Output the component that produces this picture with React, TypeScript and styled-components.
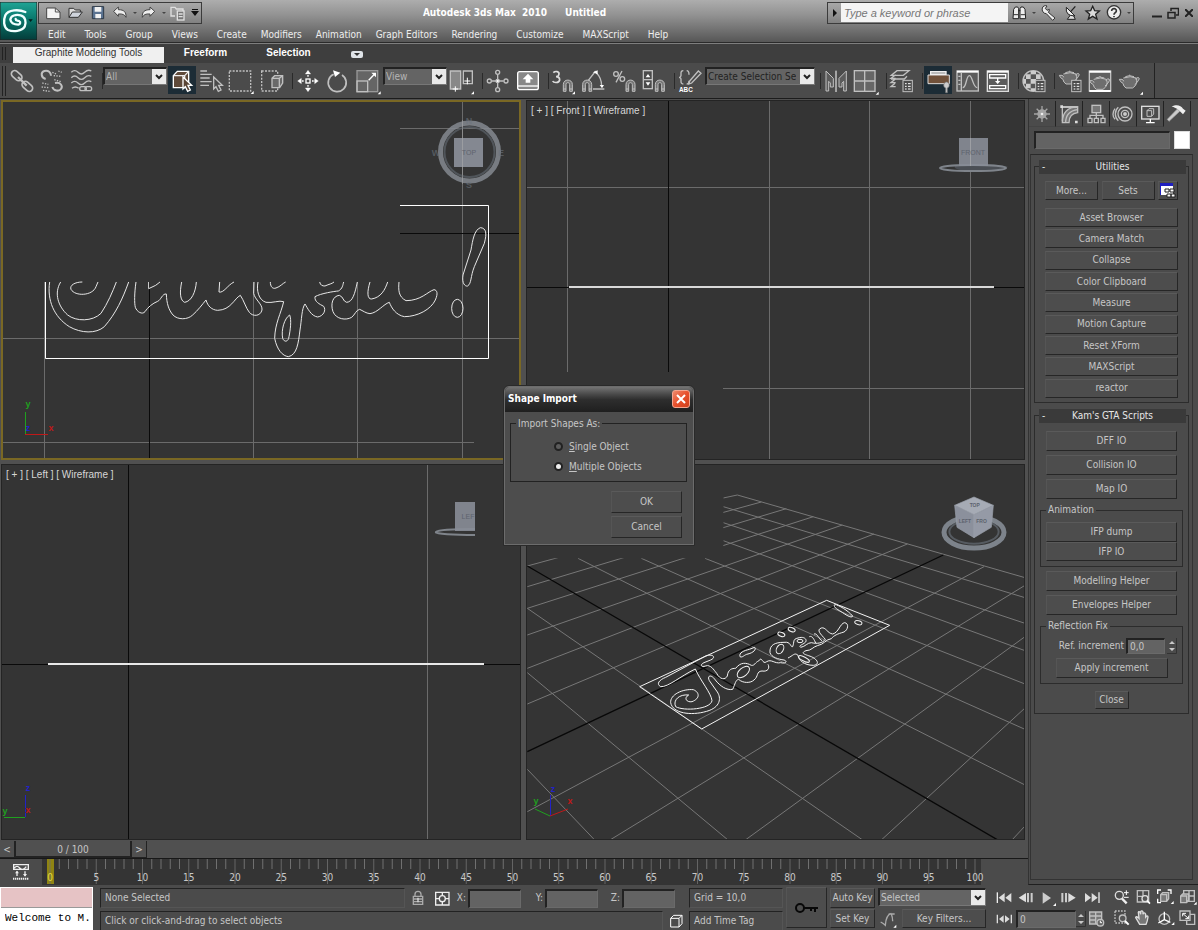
import React from "react";
import styled, { createGlobalStyle, css } from "styled-components";

const ui = '"DejaVu Sans Condensed", "DejaVu Sans", Tahoma, sans-serif';
const arial = '"Liberation Sans", Arial, sans-serif';

const Global = createGlobalStyle`
  *, *::before, *::after { box-sizing: border-box; }
  body { margin: 0; background: #4b4b4b; color: #c6c6c6; font: 10px/12px ${ui}; }
  button, input, select { font: inherit; color: inherit; margin: 0; padding: 0; border: 0; border-radius: 0; background: none; }
  svg { display: block; }
`;

const Shell = styled.div`
  display: flex;
  flex-direction: column;
  min-height: 100vh;
  min-width: 1100px;
`;

/* ---------- title bar ---------- */
const Header = styled.header`
  display: flex;
  height: 44px;
  background: linear-gradient(#adadad, #929292 35%, #6c6c6c 75%, #545454);
  border-bottom: 1px solid #7e7e7e;
  box-shadow: inset 0 -1px #2a2a2a;
`;
const AppButton = styled.button`
  width: 37px;
  height: 38px;
  margin: 2px 1px 0 0;
`;
const HeaderBody = styled.div`
  flex: 1;
  display: flex;
  flex-direction: column;
`;
const TitleRow = styled.div`
  display: grid;
  grid-template-columns: auto 1fr auto;
  height: 25px;
  align-items: center;
`;
const QuickAccess = styled.div`
  display: flex;
  align-items: center;
  width: 164px;
  height: 22px;
  border: 1px solid #3b3b3b;
  padding-left: 4px;
`;
const QuickButton = styled.button<{ $w?: number }>`
  width: ${(p) => p.$w ?? 22}px;
  height: 20px;
  display: grid;
  place-items: center;
  flex: none;
`;
const Title = styled.h1`
  margin: 0;
  display: flex;
  justify-content: center;
  gap: 18px;
  font: bold 10px/12px ${ui};
  color: #fff;
  white-space: pre;
`;
const TitleRight = styled.div`
  display: flex;
  justify-content: flex-end;
  align-items: center;
  padding-right: 2px;
`;
const InfoCenter = styled.div`
  display: flex;
  align-items: center;
  height: 22px;
  border: 1px solid #3b3b3b;
  margin-right: 15px;
`;
const Search = styled.input`
  width: 167px;
  height: 19px;
  padding: 0 3px;
  background: #f4f4f4;
  color: #555;
  font: italic 11px/18px ${arial};
  &::placeholder { color: #777; opacity: 1; }
`;
const Menu = styled.nav`
  display: flex;
  align-items: center;
  gap: 19px;
  height: 18px;
  padding: 1px 0 0 10px;
  color: #eee;
`;
const MenuRun = styled.div`
  display: flex;
  gap: 14px;
`;

/* ---------- ribbon ---------- */
const Ribbon = styled.div`
  display: flex;
  align-items: flex-start;
  height: 19px;
  background: #3e3e3e;
  font: 10px/12px ${arial};
`;
const Grip = styled.span`
  width: 4px;
  align-self: stretch;
  margin: 3px 7px 3px 2px;
  border: 1px solid #222;
  border-width: 0 1px;
  flex: none;
`;
const RibbonTab = styled.button<{ $active?: boolean }>`
  height: 16px;
  width: ${(p) => (p.$active ? 151 : 83)}px;
  margin-top: 3px;
  padding-bottom: 4px;
  color: #fff;
  font-weight: bold;
  ${(p) => p.$active && css`
    background: #f0f0f0;
    color: #333;
    font-weight: normal;
  `}
`;
const RibbonToggle = styled.button`
  width: 12px;
  height: 7px;
  margin: 7px 0 0 21px;
  border-radius: 2px;
  background: #dfe3e8;
  display: grid;
  place-items: center;
`;

/* ---------- main toolbar ---------- */
const Toolbar = styled.div`
  display: flex;
  height: 36px;
  background: #4b4b4b;
  border-bottom: 1px solid #1c1c1c;
`;
const ToolbarInner = styled.div`
  display: flex;
  border-right: 1px solid #222;
  padding-right: 9px;
`;
const ToolbarGrip = styled(Grip)`
  margin: 3px 1px 2px 2px;
`;
const Tool = styled.button<{ $on?: boolean }>`
  width: 30px;
  height: 35px;
  display: grid;
  place-items: center;
  ${(p) => p.$on && css`
    background: linear-gradient(#1c2c36, #1c2c36) 1px 3px / 28px 28px no-repeat;
  `}
`;
const Sep = styled.span`
  width: 6px;
  height: 16px;
  margin-top: 10px;
  border-right: 1px solid #2a2a2a;
  flex: none;
`;
const SelectBox = styled.span<{ $w?: number }>`
  position: relative;
  display: block;
  width: ${(p) => (p.$w ? `${p.$w}px` : "100%")};
  height: 18px;
  background: #646464;
  border: 2px solid #222;
  border-right: 1px solid #777;
  border-bottom: 1px solid #777;
  select {
    appearance: none;
    width: 100%;
    height: 100%;
    display: block;
    padding-left: 1px;
    padding-right: 18px;
    outline: none;
  }
  option { background: #686868; }
  > svg { position: absolute; right: 0; top: 0; pointer-events: none; }
`;
const ToolSelect = styled(SelectBox)`
  margin-top: 4px;
  color: ${(p) => (p.$w === 110 ? "#222" : "#b5b5b5")};
`;

/* ---------- workspace ---------- */
const Workspace = styled.main`
  flex: 1;
  display: flex;
`;
const Stage = styled.div`
  flex: 1;
  min-width: 0;
  display: flex;
  flex-direction: column;
`;
const Viewports = styled.div`
  flex: 1;
  min-height: 480px;
  display: grid;
  grid-template-columns: minmax(0, 520fr) minmax(0, 499fr);
  grid-template-rows: minmax(0, 360fr) minmax(0, 376fr);
  column-gap: 5px;
  row-gap: 4px;
  padding: 1px 3px 1px 1px;
  background: #505050;
`;
const Viewport = styled.section<{ $active?: boolean }>`
  position: relative;
  background: #343434;
  > svg { position: absolute; inset: 0; width: 100%; height: 100%; }
  &::after {
    content: "";
    position: absolute;
    inset: 0;
    pointer-events: none;
    border: ${(p) => (p.$active ? "2px solid #7a6824" : "1px solid #242424")};
  }
`;
const ViewLabel = styled.span`
  position: absolute;
  left: 5px;
  top: 5px;
  font: 10px/12px ${arial};
  color: #d6d6d6;
`;
const TimeSlider = styled.div`
  display: flex;
  height: 17px;
  background: #505050;
`;
const SliderStep = styled.button`
  width: 15px;
  padding-top: 2px;
  border: 1px solid #222;
  border-width: 0 1px 1px 0;
`;
const SliderThumb = styled.button`
  width: 117px;
  padding-top: 3px;
  border: 1px solid #222;
  border-width: 0 2px 2px 1px;
`;
const TrackBar = styled.div`
  display: flex;
  height: 27px;
  border-top: 1px solid #181818;
`;
const TrackToggle = styled.button`
  width: 42px;
  display: grid;
  place-items: center;
`;
const Track = styled.div`
  flex: 1;
  margin-right: 47px;
  background: #343434;
  font: 10px/12px ${ui};
  svg { width: 100%; height: 25px; overflow: visible; }
`;

/* ---------- command panel ---------- */
const Panel = styled.aside`
  width: 170px;
  flex: none;
  display: flex;
  flex-direction: column;
  border-left: 1px solid #333;
  border-bottom: 1px solid #1f1f1f;
`;
const PanelTabs = styled.div`
  display: flex;
  height: 28px;
  padding-top: 2px;
`;
const PanelTab = styled.button<{ $active?: boolean }>`
  width: 27px;
  display: grid;
  place-items: center;
  border-right: 1px solid #222;
  border-bottom: 1px solid ${(p) => (p.$active ? "transparent" : "#444")};
`;
const NameRow = styled.div`
  display: flex;
  gap: 4px;
  height: 18px;
  margin: 4px 8px 0 5px;
`;
const Field = styled.input`
  min-width: 0;
  width: 100%;
  background: #636363;
  border: 2px solid #222;
  border-right: 1px solid #6a6a6a;
  border-bottom: 1px solid #6a6a6a;
  padding-left: 2px;
`;
const Swatch = styled.button`
  width: 16px;
  flex: none;
  background: #fff;
  border: 1px solid #ddd;
`;
const Rollouts = styled.div`
  flex: 1;
  margin: 5px 5px 4px 1px;
  padding: 5px 2px 0 3px;
  border: 1px solid #333;
  border-top-color: #2a2a2a;
`;
const Rollout = styled.section<{ $pad: number }>`
  position: relative;
  border: 1px solid #2c2c2c;
  margin: 6px 0 12px;
  padding: 14px ${(p) => p.$pad}px 4px;
  width: 155px;
`;
const RolloutTitle = styled.button`
  position: absolute;
  top: -7px;
  left: 4px;
  right: 2px;
  height: 14px;
  background: #3a3a3a;
  color: #e6e6e6;
  text-align: center;
  &::before { content: "-"; position: absolute; left: 3px; }
`;
const Push = styled.button<{ $w?: number; $h?: number }>`
  display: block;
  width: ${(p) => (p.$w ? `${p.$w}px` : "100%")};
  height: ${(p) => p.$h ?? 19}px;
  background: #4d4d4d;
  border: 1px solid #5a5a5a;
  border-left-color: #555;
  border-right: 1px solid #262626;
  border-bottom: 1px solid #262626;
  white-space: nowrap;
`;
const PushRow = styled.div`
  display: flex;
  justify-content: space-between;
  margin-bottom: 8px;
`;
const PushList = styled.div`
  display: grid;
  grid-auto-rows: 1fr;
  gap: 2px;
  height: 190px;
`;
const Stack = styled.div<{ $top?: number }>`
  display: flex;
  flex-direction: column;
  align-items: center;
  gap: 4px;
  margin: 0 6px;
  padding-top: ${(p) => p.$top ?? 0}px;
`;
const Group = styled.fieldset`
  margin: 5px 0 4px;
  padding: 6px 5px 5px;
  border: 1px solid #2c2c2c;
  min-width: 0;
  legend { padding: 0 2px; margin-left: 0; }
`;
const SpinRow = styled.div`
  display: flex;
  justify-content: flex-end;
  align-items: center;
  gap: 2px;
  height: 16px;
  margin-bottom: 4px;
  input { width: 39px; height: 16px; }
`;

/* ---------- dialog ---------- */
const DialogLayer = styled.div`
  position: fixed;
  inset: 0;
  display: grid;
  place-items: center;
  pointer-events: none;
`;
const Dialog = styled.div`
  pointer-events: auto;
  width: 192px;
  background: #4d4d4d;
  border: 1px solid #2a2a2a;
  border-radius: 6px 6px 0 0;
  box-shadow: inset 0 0 0 1px #6c6c6c;
  padding: 1px 1px 7px;
`;
const DialogTitle = styled.div`
  display: flex;
  align-items: center;
  justify-content: space-between;
  height: 25px;
  padding: 0 3px 0 3px;
  border-radius: 5px 5px 0 0;
  background: linear-gradient(#747474, #484848 30%, #2e2e2e 50%, #1f1f1f);
  color: #fff;
  font-weight: bold;
`;
const CloseBox = styled.button`
  width: 18px;
  height: 18px;
  border: 1px solid #f5a58e;
  border-radius: 3px;
  background: linear-gradient(135deg, #f08a6d, #e8502c 50%, #cf3f1a);
  display: grid;
  place-items: center;
`;
const DialogGroup = styled(Group)`
  margin: 6px 6px 9px 5px;
  padding: 7px 8px 4px 43px;
  border-color: #222;
  legend { margin-left: -38px; }
`;
const RadioLabel = styled.label`
  display: flex;
  align-items: center;
  gap: 6px;
  height: 20px;
  u { text-underline-offset: 1px; }
  input {
    appearance: none;
    width: 9px;
    height: 9px;
    border-radius: 50%;
    border: 2px solid #222;
    background: #5c5c5c;
  }
  input:checked { background: #eee; }
`;
const DialogButtons = styled.div`
  display: flex;
  flex-direction: column;
  align-items: flex-end;
  gap: 3px;
  padding-right: 11px;
`;

/* ---------- status area ---------- */
const Status = styled.footer`
  display: flex;
  height: 45px;
  padding-top: 2px;
`;
const Listener = styled.div`
  width: 93px;
  height: 43px;
  display: flex;
  flex-direction: column;
  border: 1px solid #fff;
  flex: none;
`;
const ListenerLine = styled.input<{ $pink?: boolean }>`
  width: 100%;
  height: ${(p) => (p.$pink ? 20 : 21)}px;
  background: ${(p) => (p.$pink ? "#e6c3c5" : "#fff")};
  border-bottom: 1px solid ${(p) => (p.$pink ? "#999" : "#fff")};
  color: #000;
  padding-left: 4px;
  font: 11px/16px "Liberation Mono", "Courier New", monospace;
`;
const StatusMid = styled.div`
  flex: 1;
  min-width: 0;
  display: flex;
  flex-direction: column;
  gap: 3px;
  margin: 1px 3px 0 7px;
`;
const StatusRow = styled.div`
  display: flex;
  align-items: center;
  height: 20px;
`;
const Prompt = styled.div<{ $w?: number }>`
  ${(p) => (p.$w ? css`width: ${p.$w}px; flex: none;` : css`flex: 1; min-width: 0;`)}
  height: 20px;
  padding: 3px 4px;
  border: 1px solid #555;
  border-left-color: #222;
  border-top-color: #222;
  white-space: nowrap;
  overflow: hidden;
`;
const StatusTool = styled.button<{ $w?: number }>`
  width: ${(p) => p.$w ?? 22}px;
  height: 20px;
  display: grid;
  place-items: center;
  flex: none;
`;
const Coord = styled.label<{ $w: number }>`
  display: flex;
  align-items: center;
  justify-content: flex-end;
  gap: 2px;
  width: ${(p) => p.$w}px;
  input { width: 53px; height: 19px; }
`;
const CoordGap = styled.span`
  width: 14px;
  flex: none;
`;
const KeyBig = styled(Push)`
  display: grid;
  place-items: center;
  flex: none;
`;
const KeyGrid = styled.div`
  display: grid;
  grid-template-columns: 45px 108px;
  grid-template-rows: 20px 19px;
  gap: 1px 3px;
  margin: 1px 7px 0 3px;
  align-content: start;
`;
const KeyFilters = styled.div`
  display: flex;
  gap: 2px;
`;
const Playback = styled.div`
  display: flex;
  flex-direction: column;
  width: 117px;
`;
const NavGrid = styled.div`
  display: grid;
  grid-template-columns: repeat(4, 22px);
  grid-auto-rows: 21px;
`;
const FrameRow = styled.div`
  display: flex;
  align-items: center;
  height: 21px;
  input { width: 60px; height: 18px; margin-left: 1px; }
`;

/* ---------- icons ---------- */
type BoxProps = { x: number; y: number; w?: number; h?: number; children: React.ReactNode };
/* Icon art is drawn at three units per pixel. */
const Ic = ({ x, y, w = 28, h = 30, children }: BoxProps) => (
  <svg width={w} height={h} viewBox={`${x} ${y} ${w * 3} ${h * 3}`} fill="none" stroke="#c0c0c0" strokeWidth="4" aria-hidden="true">
    {children}
  </svg>
);
const Arrow = () => (
  <svg width="14" height="15" viewBox="0 0 14 15" aria-hidden="true">
    <rect width="14" height="15" fill="#e9e9e9" />
    <path d="M4 6l3 3 3-3" fill="none" stroke="#222" strokeWidth="2" />
  </svg>
);
const Spin = () => (
  <svg width="10" height="16" viewBox="0 0 10 16" fill="#c8c8c8" aria-hidden="true">
    <path d="M2 6l3-3 3 3zM2 10l3 3 3-3z" />
    <path d="M9.500 0v15.500H0" fill="none" stroke="#333" />
  </svg>
);
const Dot = () => (
  <svg width="4" height="4" viewBox="0 0 4 4" aria-hidden="true"><path d="M0 1h4L2 3z" fill="#444" /></svg>
);
const Corner = ({ x, y }: { x: number; y: number }) => <path d={`M${x} ${y}l9 -9v9z`} fill="#fff" stroke="none" />;
const Magnet = ({ x }: { x: number }) => (
  <path d={`M${x} 271v-21c0-17 27-17 27 0v21h-8v-20c0-8-11-8-11 0v20zM${x} 264h8M${x + 19} 264h8`} strokeWidth="3" fill="#777" />
);
const Teapot = ({ dx = 0, dy = 0 }: { dx?: number; dy?: number }) => (
  <g transform={`translate(${dx} ${dy})`} strokeWidth="3">
    <path d="M980 231q22-8 38 0q8 18-10 30h-20q-8-5-9-14q-9-4-11-12h8q5 2 5 6M1016 234q6-6 10-4t-1 9-11 12" fill="#6e6e6e" />
    <path d="M986 227q12-6 26 0M999 221v3" />
  </g>
);
const List = ({ x, y }: { x: number; y: number }) => (
  <g strokeWidth="3"><rect x={x} y={y} width="28" height="34" fill="#4b4b4b" /><path d={`M${x + 6} ${y + 10}h5M${x + 15} ${y + 10}h8M${x + 6} ${y + 18}h5M${x + 15} ${y + 18}h8M${x + 6} ${y + 26}h5M${x + 15} ${y + 26}h8`} stroke="#fff" /></g>
);

const Logo = () => (
  <svg width="37" height="38" viewBox="0 6 111 114" aria-hidden="true">
    <defs><linearGradient id="lg" x2="0" y2="1"><stop offset="0" stopColor="#1fa596" /><stop offset=".5" stopColor="#087267" /><stop offset="1" stopColor="#043c3a" /></linearGradient></defs>
    <rect y="6" width="111" height="114" fill="url(#lg)" stroke="#222" strokeWidth="3" />
    <path d="M76 36C58 28 24 28 16 46c-6 14-6 36 8 44 16 6 42 4 50-10 6-14 2-30-12-34-14-3-30 0-31 13 2 12 14 15 24 15 6-1 8-8 2-11-6-2-10 0-10-6" fill="none" stroke="#f2ffff" strokeWidth="7" strokeLinecap="round" />
    <path d="M85 58h13l-6 8z" fill="#021c1a" />
  </svg>
);

const quick = {
  "New": <Ic x={135} y={12} w={18} h={18}><path d="M140 24h26l14 12v20h-40z" fill="#f4f4f4" stroke="#444" strokeWidth="3" /><path d="M166 24v12h14" stroke="#555" strokeWidth="3" /></Ic>,
  "Open": <Ic x={198} y={12} w={18} h={18}><path d="M204 52V25h14l5 5h15v8" fill="#ddd" stroke="#333" strokeWidth="3" /><path d="M204 52l10-16h30l-12 16z" fill="#cfd4dc" stroke="#333" strokeWidth="3" /></Ic>,
  "Save": <Ic x={262} y={12} w={18} h={18}><path d="M272 20h34v36h-34z" fill="#5b7391" stroke="#2d3846" strokeWidth="3" /><path d="M279 21h20v14h-20zM281 42h17v13h-17z" fill="#f2f2f2" stroke="none" /></Ic>,
  "Undo": <Ic x={328} y={12} w={18} h={18}><path d="M336 34l14-13v8c18 0 24 8 23 23-4-8-10-11-23-10v7z" fill="#eee" stroke="#444" strokeWidth="3" /></Ic>,
  "Redo": <Ic x={416} y={12} w={18} h={18}><path d="M460 34l-14-13v8c-18 0-24 8-23 23 4-8 10-11 23-10v7z" fill="#eee" stroke="#444" strokeWidth="3" /></Ic>,
  "Project folder": <Ic x={506} y={12} w={18} h={18}><path d="M524 48h-12V22h12l4 5h20v6" stroke="#e0e0e0" /><rect x="531" y="33" width="20" height="27" stroke="#e0e0e0" fill="#777" /><path d="M535 42h12M535 50h12" stroke="#e0e0e0" /></Ic>,
};

const view: Record<string, [React.ReactNode, number]> = {
  "Search": [<Ic x={635} y={12} w={18} h={18}><path d="M644 56l2-28 5-7h7l3 5v30zM665 56V26l3-5h7l5 7 2 28zM660 32h6" fill="#ededed" stroke="#222" strokeWidth="3" /><path d="M645 44h14M667 44h14" stroke="#333" strokeWidth="3" /></Ic>, 22],
  "Search options": [<Dot />, 8],
  "Subscription": [<Ic x={726} y={12} w={18} h={18}><path d="M733 24a10 10 0 0 1 14-6l-5 7 5 6 7-3a11 11 0 0 1-3 9l20 17-7 7-19-20a13 13 0 0 1-12-17z" fill="#eee" stroke="#333" strokeWidth="3" /></Ic>, 22],
  "Communication": [<Ic x={790} y={12} w={18} h={18}><path d="M816 44l-10 14h24l-7-14z" fill="#ddd" stroke="#222" strokeWidth="3" /><path d="M803 22q-4 26 26 26z" fill="#eee" stroke="#222" strokeWidth="3" /><path d="M816 35l14-16" stroke="#222" /></Ic>, 22],
  "Favorites": [<Ic x={855} y={12} w={18} h={18}><path d="M881 19l6 13 14 1-11 10 4 14-13-8-13 8 4-14-11-10 14-1z" fill="#dadada" stroke="#222" /></Ic>, 21],
  "Help": [<Ic x={920} y={12} w={18} h={18}><circle cx="947" cy="37" r="20" fill="#eee" stroke="#333" /><path d="M940 33c0-10 15-9 14 0 0 5-7 5-7 11M947 48v4" stroke="#333" strokeWidth="5" /></Ic>, 22],
  "Help options": [<Dot />, 8],
};

/* toolbar drawings */
const tLink = <Ic x={24} y={195}><g strokeWidth="5"><rect x="32" y="214" width="36" height="20" rx="10" transform="rotate(42 50 224)" /><rect x="64" y="246" width="36" height="20" rx="10" transform="rotate(42 82 256)" /><path d="M54 228l26 26" strokeWidth="7" /></g></Ic>;
const tUnlink = <Ic x={115} y={195}><g strokeWidth="6"><path d="M138 234c-14-4-16-20-4-24 12-4 20 6 20 14M166 246c18-4 24 10 18 18s-22 6-26-6" /><path d="M158 214l14 6M162 224l24 2M164 236l20 6M176 210l10 4M128 246l18 4M126 258l22 2M130 268l24 4" strokeDasharray="4 4" strokeWidth="4" /></g></Ic>;
const tBind = <Ic x={207} y={195}><path d="M217 214q10-10 20 0t20 0 20-4M217 230q10-10 20 0t20 0 20-4M217 246q10-10 20 0t20 0 20-4M219 262q10-8 20 0" /><rect x="242" y="257" width="20" height="12" rx="6" /><rect x="258" y="257" width="20" height="12" rx="6" /></Ic>;
const tSelect = <Ic x={508} y={195}><path d="M524 224l12-13h34v33l-12 16h-34z" fill="#5f4a3a" stroke="#fff" /><path d="M524 224h34v36M558 224l12-13" stroke="#eee" /><path d="M553 228l26 25h-11l7 14-8 4-7-14-7 7z" fill="#5a4434" stroke="#fff" /></Ic>;
const tByName = <Ic x={599} y={195}><path d="M606 210h20M606 220h34M606 231h28M606 242h34M606 253h26" /><path d="M646 228l26 25h-11l7 14-8 4-7-14-7 7z" /></Ic>;
const tRegion = <Ic x={693} y={195}><rect x="697" y="210" width="64" height="60" strokeDasharray="6 4" /><Corner x={761} y={279} /></Ic>;
const tWindow = <Ic x={777} y={195}><rect x="788" y="210" width="48" height="60" strokeDasharray="6 4" /><path d="M819 232l8-8h24v22l-9 14h-23zM819 232h22v28M841 232l10-8" fill="#6a6a6a" /></Ic>;
const tMove = <Ic x={883} y={195}><g stroke="#fff"><rect x="919" y="234" width="12" height="12" /><path d="M925 214v14M925 252v14M899 240h14M937 240h14" strokeDasharray="5 3" /><path d="M917 219l8-11 8 11zM917 261l8 11 8-11zM905 232l-11 8 11 8zM945 232l11 8-11 8z" fill="#fff" strokeWidth="1" /></g></Ic>;
const tRotate = <Ic x={973} y={195}><path d="M1002 220a27 27 0 1 0 25 2" strokeWidth="5" /><path d="M1000 208l22 7-16 13z" fill="#fff" stroke="none" /></Ic>;
const tScale = <Ic x={1066} y={195}><rect x="1075" y="209" width="62" height="63" fill="#656565" stroke="#999" /><rect x="1075" y="240" width="32" height="32" /><path d="M1110 238l18-19" stroke="#fff" /><path d="M1118 215h14v14z" fill="#fff" stroke="none" /><Corner x={1137} y={280} /></Ic>;
const tPivot = <Ic x={153} y={195}><path d="M160 210h31v54h-31z" fill="#888" /><path d="M199 210h27v38h-27z" /><path d="M175 256v16M167 264h16M211 230v20M202 240h18" stroke="#fff" strokeWidth="3" /><Corner x={222} y={280} /></Ic>;
const tManip = <Ic x={256} y={195}><circle cx="297" cy="214" r="6" /><circle cx="297" cy="266" r="6" /><circle cx="272" cy="240" r="6" /><circle cx="322" cy="240" r="6" /><path d="M297 221v38M279 240h36" /><circle cx="297" cy="240" r="5" fill="#fff" /></Ic>;
const tKeyboard = <Ic x={345} y={195}><rect x="356" y="212" width="62" height="54" rx="6" fill="#888" stroke="#fff" /><path d="M356 255h62" stroke="#fff" /><path d="M387 218l16 17h-9v10h-14v-10h-9z" fill="#fff" stroke="none" /></Ic>;
const tSnap = <Ic x={460} y={195}><path d="M470 215c6-6 18-4 17 4-1 7-6 8-9 8 6 0 11 3 11 10-2 10-18 9-21 3" strokeWidth="5" stroke="#ddd" /><Magnet x={500} /><Corner x={526} y={280} /></Ic>;
const tAngle = <Ic x={545} y={195}><Magnet x={553} /><path d="M570 238l22-28M584 264h34M592 214q18 16 18 42" /><path d="M584 214l14-6 0 12zM604 252h13l-6 10z" fill="#fff" stroke="none" /></Ic>;
const tPercent = <Ic x={632} y={195}><circle cx="650" cy="219" r="7" /><circle cx="669" cy="234" r="7" /><path d="M668 210l-18 34" /><Magnet x={680} /></Ic>;
const tSpinner = <Ic x={724} y={195}><rect x="734" y="209" width="27" height="54" /><path d="M734 236h27" /><path d="M741 229l7-10 7 10zM741 244l7 10 7-10z" fill="#fff" stroke="none" /><Magnet x={770} /></Ic>;
const tSets = <Ic x={830} y={195}><path d="M852 209q-8 0-7 10t-6 10q7 0 6 10t7 10M862 209q7 0 7 12M862 249q7 0 7-10M871 240l26-30 8 7-28 29-8 3z" /><text x="839" y="272" fontFamily="Liberation Sans" fontWeight="bold" fontSize="19" fill="#fff" stroke="none">ABC</text></Ic>;
const tMirror = <Ic x={77} y={195}><path d="M89 210l22 22v26h-9v-12l-5-5v29h-8zM150 210l-22 22v26h9v-12l5-5v29h8z" fill="#5c5c5c" strokeWidth="3" /><path d="M119 209v64" stroke="#fff" strokeWidth="3" /></Ic>;
const tAlign = <Ic x={172} y={195}><rect x="179" y="209" width="62" height="62" fill="#666" /><path d="M210 209v62M179 240h62" /><Corner x={243} y={281} /></Ic>;
const tLayers = <Ic x={277} y={195}><path d="M287 223l17-14h36l-17 14zM300 232h-14l14-11M286 234h40l8-8M300 245h-14l12-10M300 257h-14l12-10" /><List x={322} y={238} /></Ic>;
const tGraphite = <Ic x={382} y={195}><path d="M394 222h64v26h-64z" fill="#70513a" stroke="#ddd" strokeWidth="3" /><path d="M402 220v-8h46v8z" fill="#aaa" stroke="#eee" /><path d="M449 243c-10 2-10 16-2 18v14h5v-14c9-3 7-17-3-18z" fill="#ccc" stroke="#777" strokeWidth="2" /></Ic>;
const tCurve = <Ic x={474} y={195}><rect x="483" y="210" width="64" height="60" fill="#5c5c5c" /><path d="M483 212h64" stroke="#fff" strokeWidth="6" /><path d="M496 216v54M487 226h6M487 238h6M487 250h6" /><path d="M500 260c12 0 10-36 20-36s10 36 24 36" /></Ic>;
const tSchematic = <Ic x={561} y={195}><rect x="571" y="210" width="63" height="61" fill="#5c5c5c" stroke="#ddd" /><path d="M571 212h63" stroke="#fff" strokeWidth="6" /><path d="M578 221h48v10h-48zM578 254h48v9h-48zM602 231v10" stroke="#fff" /><path d="M594 240h16l-8 9z" fill="#fff" stroke="none" /></Ic>;
const tMaterial = <Ic x={670} y={195}><circle cx="710" cy="240" r="31" fill="#555" /><path d="M688 220h14v-10h16v10h14v14h-14v14h-16v-14h-14zM688 248h14v14h-14zM680 234h8v14h-8zM702 262h16v8h-16z" fill="#ccc" stroke="none" /><path d="M702 220h16v14h-16z" fill="#555" stroke="none" /><List x={717} y={238} /></Ic>;
const tSetup = <Ic x={776} y={195}><Teapot dx={-182} dy={-12} /><List x={823} y={238} /></Ic>;
const tFrame = <Ic x={866} y={195}><rect x="876" y="210" width="64" height="60" fill="#606060" /><path d="M876 212h64M876 270h64" stroke="#fff" strokeWidth="6" /><Teapot dx={-91} dy={4} /></Ic>;
const tRender = <Ic x={958} y={195}><Teapot /><Corner x={1030} y={281} /></Ic>;

const panelTabs: [string, React.ReactNode][] = [
  ["Create", <Ic x={14} y={7} w={24} h={22}><g stroke="#a5a5a5"><path d="M50 16v48M26 40h48M34 24l32 32M66 24L34 56" /><circle cx="50" cy="40" r="12" fill="#a5a5a5" /><circle cx="50" cy="40" r="4" fill="#eee" stroke="none" /></g></Ic>],
  ["Modify", <Ic x={96} y={7} w={24} h={22}><path d="M112 66c0-28 14-46 46-48v18c-18 2-26 12-26 30z" fill="#777" /><path d="M122 66c0-22 12-36 36-39M112 62V20h44M108 18h48" /><path d="M106 14h8v8h-8zM150 60h8v8h-8z" fill="#ddd" stroke="none" /></Ic>],
  ["Hierarchy", <Ic x={177} y={7} w={24} h={22}><rect x="201" y="14" width="26" height="22" fill="#777" /><path d="M214 36v16M195 52v-8h39v8" /><path d="M189 53h12v13h-12zM208 53h12v13h-12zM228 53h12v13h-12z" /></Ic>],
  ["Motion", <Ic x={262} y={7} w={24} h={22}><circle cx="304" cy="40" r="21" /><circle cx="304" cy="40" r="11" /><circle cx="304" cy="40" r="4" fill="#ddd" /><path d="M284 20c-12 10-12 30 0 40M274 24c-8 10-8 24 0 32" /></Ic>],
  ["Display", <Ic x={342} y={7} w={24} h={22}><rect x="353" y="17" width="52" height="38" stroke="#ddd" /><path d="M366 66h26M379 55v10" stroke="#fff" /><path d="M369 30l6-6h14v16l-6 7h-14zM369 30h14v16" strokeWidth="3" /></Ic>],
  ["Utilities", <Ic x={424} y={7} w={24} h={22}><path d="M468 32l-32 30-5-6 30-31z" fill="#ccc" stroke="#aaa" strokeWidth="2" /><path d="M444 18c14-8 28-4 34 6l8 6-8 11-10-10-8-7c-4-2-8-5-16-6z" fill="#eee" stroke="none" /></Ic>],
];

const nav: [string, React.ReactNode][] = [
  ["Zoom", <Ic x={935} y={157} w={21} h={20}><circle cx="960" cy="182" r="12" stroke="#ddd" /><path d="M968 192l14 14" stroke="#eee" strokeWidth="7" /><path d="M974 174h14M981 167v14M974 188h14" stroke="#fff" strokeWidth="3" /></Ic>],
  ["Zoom all", <Ic x={1000} y={157} w={21} h={20}><path d="M1013 168h34v34h-34zM1030 168v34M1013 185h34" /><circle cx="1036" cy="192" r="9" fill="#555" stroke="#ddd" /><path d="M1042 198l9 9" stroke="#fff" strokeWidth="5" /></Ic>],
  ["Zoom extents", <Ic x={1068} y={157} w={21} h={20}><path d="M1076 178v-12h10M1106 166h10v12M1086 204h-10v-12" stroke="#fff" /><path d="M1085 180l6-6h18v18l-6 8h-18zM1085 180h18v20" fill="#777" /><Corner x={1115} y={208} /></Ic>],
  ["Zoom extents all", <Ic x={1130} y={157} w={21} h={20}><path d="M1150 168h32v32h-32zM1166 168v32M1150 184h32" /><path d="M1141 184l6-6h18v18l-6 8h-18zM1141 184h18v20" fill="#777" /><Corner x={1180} y={210} /></Ic>],
  ["Zoom region", <Ic x={935} y={219} w={21} h={20}><rect x="947" y="228" width="30" height="36" strokeDasharray="5 4" /><circle cx="970" cy="250" r="10" fill="#555" /><path d="M977 258l11 11" stroke="#fff" strokeWidth="6" /></Ic>],
  ["Pan", <Ic x={1002} y={219} w={21} h={20}><path d="M1022 268l-12-20c0-4 4-4 10 2l-2-18c2-4 5-3 7 6v-8c2-4 6-3 7 1v7c2-6 6-6 8 0v8c3-4 7-4 7 0-1 8-2 14-6 22z" fill="#777" stroke="#ddd" /></Ic>],
  ["Orbit", <Ic x={1066} y={219} w={21} h={20}><circle cx="1094" cy="252" r="16" /><path d="M1094 230v24l-18 10M1094 254l18 8" stroke="#fff" /><Corner x={1115} y={270} /></Ic>],
  ["Maximize viewport", <Ic x={1130} y={219} w={21} h={20}><path d="M1139 228h30v28h-30zM1169 238h14v30h-24v-12" /><path d="M1148 236l16 14M1147 244v-9h10M1165 242v9h-10" stroke="#fff" strokeWidth="3" /></Ic>],
];

/* ---------- viewport drawings ---------- */
const GRID = "#6b6b6b";
const Small = ({ x, y, c, children }: { x: number; y: number; c: string; children: string }) => (
  <text x={x} y={y} fill={c} fontFamily="Liberation Sans" fontSize="9" fontWeight="bold" textAnchor="middle">{children}</text>
);
const CubeText = ({ x, y, children }: { x: number; y: number; children: string }) => (
  <text x={x} y={y} fill="#5e636d" fontFamily="Liberation Sans" fontSize="7" textAnchor="middle">{children}</text>
);

const TopView = () => (
  <svg viewBox="1 100 520 360" preserveAspectRatio="xMidYMid slice" fill="none" role="img" aria-label="Top view with the imported lettering">
    <path stroke={GRID} d="M44.500 282V460M253.500 282V460M357.500 282V460M462.500 100V460M400 128.500H521M1 338.500H521M1 442.500H474" />
    <path stroke="#0a0a0a" d="M149.500 282V460M400 233.500H521" />
    <path stroke="#fff" d="M400 205.500H488.500V358.500H45.500V282" />
    <g transform="translate(1 100) scale(.33333)" stroke="#e8e8e8" strokeWidth="3" strokeLinejoin="round">
      <path d="M146 546C138 600 158 650 205 680C240 700 285 702 310 680C345 640 365 596 383 546" />
      <path d="M179 546C158 580 172 620 200 645C225 665 275 665 300 640C320 610 335 575 346 546" />
      <path d="M244 546C222 546 205 556 210 568C222 590 275 588 285 560L291 546" />
      <path d="M405 546C400 580 400 610 403 622C408 636 424 645 432 635C440 622 455 610 470 604C480 600 484 580 496 582C497 610 503 630 516 645C530 660 560 660 575 645C590 632 605 612 615 600C620 618 632 630 650 631C690 630 700 595 718 586C728 600 735 625 745 637C755 650 778 650 783 630C785 612 762 600 758 580L759 546" />
      <path d="M443 546V566L464 556Q472 550 477 546M542 546C535 580 538 602 551 607C572 604 584 575 586 546M656 546L654 576C668 580 680 555 699 546M771 546C766 570 772 600 795 607C815 610 835 600 848 605C840 640 822 670 821 715C828 750 845 768 862 770C888 765 892 730 897 690C902 660 902 625 912 612C920 625 930 648 950 651C968 648 976 630 968 619C955 612 940 605 942 590C960 580 1000 574 1012 573C1025 566 1025 556 1028 546" />
      <path d="M808 546C808 560 815 568 825 564C838 560 845 550 854 546M956 546C958 556 964 558 972 558C985 552 992 552 999 546M866 645C850 655 840 690 845 715C850 728 862 726 864 710C868 690 872 660 866 645Z" />
      <path d="M1069 546C1062 580 1055 606 1037 607C1025 604 1028 590 1015 586C995 588 988 612 996 635C1005 658 1035 662 1052 652C1062 644 1065 630 1076 628C1085 632 1095 640 1107 641C1130 638 1148 612 1165 607C1172 625 1185 645 1210 650C1250 650 1290 628 1303 600C1312 580 1308 570 1299 569C1280 575 1260 602 1215 602C1192 590 1192 570 1194 546M1107 546C1098 575 1098 598 1112 597C1140 592 1152 570 1160 546" />
      <path d="M1438 383C1420 390 1415 420 1410 450L1386 525C1382 550 1392 560 1400 558C1412 550 1408 530 1420 500L1450 430C1458 400 1456 384 1438 383Z" />
      <ellipse cx="1369" cy="625" rx="17" ry="27" />
    </g>
    <g opacity=".85">
      <circle cx="469.500" cy="152" r="29" stroke="#848990" strokeWidth="5" />
      <circle cx="469.500" cy="152" r="25" stroke="#565b61" strokeWidth="2" />
      <rect x="454" y="138" width="29" height="29" fill="#9297a2" />
    </g>
    <path stroke="#aaa" opacity=".5" d="M462.500 120V184" />
    <CubeText x={469} y={155}>TOP</CubeText>
    <g opacity=".6"><Small x={469} y={124} c="#6d747e">N</Small><Small x={469} y={188} c="#6d747e">S</Small><Small x={436} y={156} c="#6d747e">W</Small><Small x={501} y={156} c="#6d747e">E</Small></g>
    <path stroke="#1fa01f" d="M25.500 412V435" /><path stroke="#c01818" d="M25 434.500H48" />
    <Small x={28} y={407} c="#1fa01f">y</Small><Small x={51} y={431} c="#c01818">x</Small><Small x={28} y={431} c="#2222c8">z</Small>
  </svg>
);
const FrontView = () => (
  <svg viewBox="526 100 499 360" preserveAspectRatio="xMidYMid slice" fill="none" role="img" aria-label="Front view">
    <path stroke={GRID} d="M567.500 100V372M769.500 100V460M869.500 100V460M970.500 100V460M526 187.500H1025M723 388.500H1025" />
    <path stroke="#0a0a0a" d="M668.500 100V372M526 287.500H1025" />
    <path stroke="#d8d8d8" strokeWidth="2" d="M569 287H994" />
    <path d="M940 168L955 166C950 172 995 174 1000 169L1008 167C1000 163 945 163 940 168Z" fill="#4a4e54" />
    <ellipse cx="973" cy="168" rx="33" ry="3" stroke="#7f848b" strokeWidth="2" />
    <rect x="959" y="138" width="29" height="28" fill="#888d97" opacity=".9" />
    <path stroke="#b5b5b5" opacity=".5" d="M970.500 138V166" />
    <CubeText x={973} y={155}>FRONT</CubeText>
  </svg>
);
const LeftView = () => (
  <svg viewBox="1 464 520 376" preserveAspectRatio="xMidYMid slice" fill="none" role="img" aria-label="Left view">
    <path stroke={GRID} d="M427.500 464V840" />
    <path stroke="#0a0a0a" d="M128.500 464V840M1 664.500H521" />
    <path stroke="#e8e8e8" strokeWidth="2" d="M48 664H484" />
    <path d="M475 529C455 529 438 530 436 532S455 535 475 535" stroke="#7f848b" strokeWidth="2" />
    <rect x="455" y="502" width="20" height="29" fill="#888d97" opacity=".9" />
    <CubeText x={468} y={519}>LEF</CubeText>
    <path stroke="#2222c8" d="M25.500 795V817" /><path stroke="#1fa01f" d="M4 817.500H25" />
    <Small x={28} y={791} c="#2222c8">z</Small><Small x={5} y={814} c="#1fa01f">y</Small><Small x={28} y={813} c="#c01818">x</Small>
  </svg>
);
const PerspectiveView = () => (
  <svg viewBox="526 464 499 376" preserveAspectRatio="xMidYMid slice" fill="none" role="img" aria-label="Perspective view with the imported lettering">
    <defs><clipPath id="drawn"><path d="M0 235H598V0H1503V1082H0Z" /></clipPath></defs>
    <g transform="translate(524 480) scale(.33333)" strokeWidth="3">
      <g clipPath="url(#drawn)">
        <path stroke="#777" d="M598 54L640 45L1503 293M10 258L712 66M10 320L787 86M10 385L868 110M10 465L955 135M10 565L1050 162M10 672L1150 192M10 995L1380 260M258 1080L1503 316M664 1080L1503 470M1072 1080L1503 684M1464 1080L1503 1038" />
        <path stroke="#777" d="M598 80L1503 353M598 128L1503 430M598 182L1503 512M543 235L1503 612M352 235L1503 748M162 235L1503 915M10 385L1016 1080M10 578L612 1080M10 868L212 1080" />
        <path stroke="#080808" strokeWidth="4" d="M1258 225L10 815M10 258L1425 1082" />
      </g>
      <g stroke="#f4f4f4" strokeLinejoin="round">
        <path d="M347 620L908 361L1097 436L533 747Z" />
        <path d="M410 620C396 612 405 600 425 592L545 528C566 520 578 532 560 540L540 548C528 553 530 563 545 558C560 553 568 568 578 580C588 600 604 600 610 588C612 568 624 565 635 565C650 545 668 548 682 556C692 558 694 546 704 543C715 525 714 556 728 545C742 536 752 552 770 548C785 552 792 544 780 540C764 538 742 532 738 518C736 495 752 487 780 487C802 484 798 502 806 500C812 484 805 478 822 474C840 468 850 478 845 486C838 494 822 496 830 502C844 500 850 488 862 488C878 492 896 490 904 478C890 462 876 450 892 444C905 440 910 460 926 462C944 458 948 430 962 428C976 430 972 450 960 456C940 462 930 466 922 476C905 478 900 494 880 497C868 500 862 512 846 512C826 520 846 524 862 530C884 540 886 555 868 556C840 556 824 540 822 526C812 516 806 528 792 534" />
        <path d="M410 620C432 622 470 588 514 567C528 600 562 640 564 662C560 688 480 694 455 680C446 660 466 642 494 645C478 654 488 668 504 665C530 655 526 636 508 629C476 626 438 644 440 668C446 700 500 708 548 694C590 682 592 654 580 636L556 602C548 586 562 582 574 600C588 618 608 632 626 628C634 612 634 600 644 598C656 610 680 610 690 600C704 590 696 574 714 573C732 576 738 564 732 553" />
        <ellipse cx="658" cy="576" rx="22" ry="12" transform="rotate(-40 658 576)" />
        <ellipse cx="768" cy="507" rx="15" ry="10" transform="rotate(-60 768 507)" />
        <path d="M648 530C644 518 660 512 676 508L692 502C698 508 688 518 672 522C660 524 656 534 648 530Z" />
        <ellipse cx="828" cy="483" rx="9" ry="5" />
        <ellipse cx="840" cy="537" rx="18" ry="6" transform="rotate(28 840 537)" />
        <path d="M870 462C880 458 884 478 894 482M856 470C866 466 870 480 876 490" />
        <ellipse cx="772" cy="463" rx="11" ry="6" transform="rotate(20 772 463)" />
        <ellipse cx="803" cy="449" rx="11" ry="6" transform="rotate(20 803 449)" />
        <path d="M932 374C944 374 972 392 986 408C984 416 968 406 956 398C944 390 926 382 932 374Z" />
        <ellipse cx="1003" cy="428" rx="11" ry="6" transform="rotate(15 1003 428)" />
      </g>
      <ellipse cx="1350" cy="157" rx="90" ry="47" stroke="#7d838b" strokeWidth="15" />
      <ellipse cx="1350" cy="155" rx="74" ry="36" stroke="#565b61" strokeWidth="6" />
      <g stroke="#9aa0aa" strokeWidth="2">
        <path d="M1350 51L1408 76L1350 104L1292 76Z" fill="#a6abb5" />
        <path d="M1292 76L1350 104V173L1299 142Z" fill="#8b909c" />
        <path d="M1408 76L1350 104V173L1402 142Z" fill="#959aa6" />
      </g>
      <g fill="#5c626d" fontFamily="Liberation Sans" fontWeight="bold" fontSize="15">
        <text x="1304" y="128">LEFT</text><text x="1357" y="130">FRO</text><text x="1337" y="80">TOP</text>
      </g>
    </g>
    <path stroke="#2222c8" d="M550.500 795V816" /><path stroke="#1fa01f" d="M550 816L535 809" /><path stroke="#c01818" d="M550 816L568 809" />
    <Small x={553} y={792} c="#2222c8">z</Small><Small x={536} y={804} c="#1fa01f">y</Small><Small x={570} y={804} c="#c01818">x</Small>
  </svg>
);

const TrackRuler = () => {
  const at = (f: number) => `${(8 + f * 9.25) / 9.39}%`;
  return (
    <svg role="img" aria-label="Frames 0 to 100">
      <rect x="5" width="7" height="25" fill="#8f8412" />
      {Array.from({ length: 101 }, (_, f) => (
        <line key={f} x1={at(f)} x2={at(f)} y1="0" y2={f % 5 ? 10 : 25} stroke="#707070" opacity={f % 5 ? 1 : 0.8} />
      ))}
      {Array.from({ length: 21 }, (_, i) => (
        <text key={i} x={at(i * 5)} y="22" textAnchor="middle" fontSize="10" fill={i ? "#c9c9c9" : "#e0d840"}>{i * 5}</text>
      ))}
    </svg>
  );
};

const utilities = ["Asset Browser", "Camera Match", "Collapse", "Color Clipboard", "Measure", "Motion Capture", "Reset XForm", "MAXScript", "reactor"];

const T = ({ n, on, children }: { n: string; on?: boolean; children: React.ReactNode }) => (
  <Tool aria-label={n} title={n} $on={on}>{children}</Tool>
);

export default function App() {
  return (
    <Shell>
      <Global />
      <Header>
        <AppButton aria-label="Application menu"><Logo /></AppButton>
        <HeaderBody>
          <TitleRow>
            <QuickAccess>
              {Object.entries(quick).map(([n, icon]) => (
                <React.Fragment key={n}>
                  <QuickButton aria-label={n}>{icon}</QuickButton>
                  {(n === "Undo" || n === "Redo") && <QuickButton $w={7} aria-label={`${n} history`}><Dot /></QuickButton>}
                </React.Fragment>
              ))}
              <QuickButton $w={12} aria-label="Customize toolbar"><svg width="8" height="7" viewBox="0 0 8 7"><path d="M1 0h6v1H1zM0 2h8L4 7z" fill="#111" /></svg></QuickButton>
            </QuickAccess>
            <Title><span>Autodesk 3ds Max  2010</span><span>Untitled</span></Title>
            <TitleRight>
              <InfoCenter>
                <QuickButton $w={13} aria-label="Collapse search"><svg width="4" height="8" viewBox="0 0 4 8"><path d="M0 0l4 4-4 4z" fill="#111" /></svg></QuickButton>
                <Search aria-label="Keyword search" placeholder="Type a keyword or phrase" />
                {Object.entries(view).map(([n, [icon, w]]) => <QuickButton key={n} $w={w} aria-label={n}>{icon}</QuickButton>)}
              </InfoCenter>
              <QuickButton $w={16} aria-label="Minimize"><svg width="10" height="10" viewBox="0 0 10 10"><path d="M0 8.500h10" stroke="#222" strokeWidth="2" /></svg></QuickButton>
              <QuickButton $w={16} aria-label="Restore"><svg width="12" height="12" viewBox="0 0 12 12" fill="none" stroke="#222"><path d="M4 4V1.500h7.500V8H9M1 5.500h7V11H1z" strokeWidth="1.500" /></svg></QuickButton>
              <QuickButton $w={15} aria-label="Close window"><svg width="8" height="8" viewBox="0 0 8 8"><path d="M0 0l8 8M8 0L0 8" stroke="#222" strokeWidth="2" /></svg></QuickButton>
            </TitleRight>
          </TitleRow>
          <Menu>
            {["Edit", "Tools", "Group", "Views"].map((m) => <button key={m}>{m}</button>)}
            <MenuRun>{["Create", "Modifiers", "Animation", "Graph Editors", "Rendering"].map((m) => <button key={m}>{m}</button>)}</MenuRun>
            {["Customize", "MAXScript", "Help"].map((m) => <button key={m}>{m}</button>)}
          </Menu>
        </HeaderBody>
      </Header>

      <Ribbon>
        <Grip />
        <RibbonTab $active>Graphite Modeling Tools</RibbonTab>
        <RibbonTab>Freeform</RibbonTab>
        <RibbonTab>Selection</RibbonTab>
        <RibbonToggle aria-label="Minimize ribbon"><svg width="6" height="3" viewBox="0 0 6 3"><path d="M0 0h6L3 3z" fill="#333" /></svg></RibbonToggle>
      </Ribbon>

      <Toolbar>
        <ToolbarInner>
          <ToolbarGrip />
          <T n="Select and link">{tLink}</T><T n="Unlink selection">{tUnlink}</T><T n="Bind to space warp">{tBind}</T>
          <Sep />
          <ToolSelect $w={64}><select aria-label="Selection filter"><option>All</option></select><Arrow /></ToolSelect>
          <T n="Select object" on>{tSelect}</T><T n="Select by name">{tByName}</T><T n="Selection region">{tRegion}</T><T n="Window crossing">{tWindow}</T>
          <Sep />
          <T n="Move">{tMove}</T><T n="Rotate">{tRotate}</T><T n="Scale">{tScale}</T>
          <ToolSelect $w={64}><select aria-label="Coordinate system"><option>View</option></select><Arrow /></ToolSelect>
          <T n="Pivot center">{tPivot}</T>
          <Sep />
          <T n="Manipulate">{tManip}</T><T n="Keyboard override">{tKeyboard}</T>
          <Sep />
          <T n="Snaps">{tSnap}</T><T n="Angle snap">{tAngle}</T><T n="Percent snap">{tPercent}</T><T n="Spinner snap">{tSpinner}</T>
          <Sep />
          <T n="Edit selection sets">{tSets}</T>
          <ToolSelect $w={110}><select aria-label="Selection sets"><option>Create Selection Set</option></select><Arrow /></ToolSelect>
          <Sep />
          <T n="Mirror">{tMirror}</T><T n="Align">{tAlign}</T>
          <Sep />
          <T n="Layers">{tLayers}</T>
          <Sep />
          <T n="Graphite tools" on>{tGraphite}</T><T n="Curve editor">{tCurve}</T><T n="Schematic view">{tSchematic}</T>
          <Sep />
          <T n="Material editor">{tMaterial}</T>
          <Sep />
          <T n="Render setup">{tSetup}</T><T n="Rendered frame">{tFrame}</T><T n="Render">{tRender}</T>
        </ToolbarInner>
      </Toolbar>

      <Workspace>
        <Stage>
          <Viewports>
            <Viewport $active><TopView /></Viewport>
            <Viewport><FrontView /><ViewLabel>[ + ] [ Front ] [ Wireframe ]</ViewLabel></Viewport>
            <Viewport><LeftView /><ViewLabel>[ + ] [ Left ] [ Wireframe ]</ViewLabel></Viewport>
            <Viewport><PerspectiveView /></Viewport>
          </Viewports>
          <TimeSlider>
            <SliderStep aria-label="Previous frame">&lt;</SliderStep>
            <SliderThumb>0 / 100</SliderThumb>
            <SliderStep aria-label="Next frame">&gt;</SliderStep>
          </TimeSlider>
          <TrackBar>
            <TrackToggle aria-label="Open mini curve editor">
              <svg width="16" height="16" viewBox="0 0 48 48" fill="none" stroke="#eee" strokeWidth="4"><path d="M2 2h44v14H2zM4 12q8-10 16 0t20-4M12 36V22M36 22v14" /><path d="M6 28l6-8 6 8zM30 30l6 8 6-8z" fill="#eee" stroke="none" /><path d="M0 44h48" strokeWidth="6" strokeDasharray="4 2" /></svg>
            </TrackToggle>
            <Track><TrackRuler /></Track>
          </TrackBar>
        </Stage>

        <Panel>
          <PanelTabs>
            {panelTabs.map(([n, icon]) => <PanelTab key={n} aria-label={n} $active={n === "Utilities"}>{icon}</PanelTab>)}
          </PanelTabs>
          <NameRow><Field aria-label="Object name" /><Swatch aria-label="Object color" /></NameRow>
          <Rollouts>
            <Rollout $pad={10}>
              <RolloutTitle>Utilities</RolloutTitle>
              <PushRow>
                <Push $w={53}>More...</Push><Push $w={53}>Sets</Push>
                <Push $w={20} aria-label="Configure button sets">
                  <svg width="18" height="16" viewBox="0 0 18 16"><path d="M1 0h13v12H1z" fill="#fff" /><path d="M1 0h13v3H1z" fill="#2020c0" /><path d="M1.500 0v12" stroke="#2020c0" /><path d="M6 6h4v3H6zM11 6h4v3h-4zM8 11h4v3H8zM12 11h4v3h-4z" fill="#fff" stroke="#222" /></svg>
                </Push>
              </PushRow>
              <PushList>{utilities.map((u) => <Push key={u} $h={19}>{u}</Push>)}</PushList>
            </Rollout>
            <Rollout $pad={5}>
              <RolloutTitle>Kam's GTA Scripts</RolloutTitle>
              <Stack $top={1}><Push $h={20}>DFF IO</Push><Push $h={20}>Collision IO</Push><Push $h={20}>Map IO</Push></Stack>
              <Group>
                <legend>Animation</legend>
                <Push $h={20}>IFP dump</Push><Push $h={19}>IFP IO</Push>
              </Group>
              <Stack><Push $h={20}>Modelling Helper</Push><Push $h={20}>Envelopes Helper</Push></Stack>
              <Group>
                <legend>Reflection Fix</legend>
                <SpinRow><label htmlFor="refinc">Ref. increment</label><Field id="refinc" defaultValue="0,0" /><Spin /></SpinRow>
                <Stack><Push $w={112} $h={20}>Apply increment</Push></Stack>
              </Group>
              <Stack $top={3}><Push $w={34} $h={18}>Close</Push></Stack>
            </Rollout>
          </Rollouts>
        </Panel>
      </Workspace>

      <Status>
        <Listener>
          <ListenerLine $pink aria-label="Macro recorder" />
          <ListenerLine aria-label="Script listener" defaultValue="Welcome to M." />
        </Listener>
        <StatusMid>
          <StatusRow>
            <Prompt>None Selected</Prompt>
            <StatusTool $w={25} aria-label="Lock selection"><Ic x={33} y={157} w={16} h={20}><path d="M43 182h28v24H43zM48 182v-6c0-12 18-12 18 0v6M43 190h28M43 198h28" stroke="#aaa" /><path d="M57 186v14" stroke="#ddd" /></Ic></StatusTool>
            <StatusTool $w={24} aria-label="Absolute mode"><Ic x={107} y={160} w={16} h={17}><path d="M112 167h40v38h-40zM132 167v38M112 186h40" stroke="#eee" /><circle cx="132" cy="186" r="9" fill="#4b4b4b" stroke="#eee" /></Ic></StatusTool>
            <Coord $w={67}>X:<Field aria-label="X" /></Coord>
            <Coord $w={77}>Y:<Field aria-label="Y" /></Coord>
            <Coord $w={77}>Z:<Field aria-label="Z" /></Coord>
            <CoordGap />
            <Prompt $w={94}>Grid = 10,0</Prompt>
          </StatusRow>
          <StatusRow>
            <Prompt>Click or click-and-drag to select objects</Prompt>
            <StatusTool $w={26} aria-label="Isolate"><Ic x={805} y={231} w={18} h={18}><path d="M816 250l9-9h25v25l-9 10h-25zM816 250h25v26M841 250l9-9" stroke="#fff" strokeWidth="3" /></Ic></StatusTool>
            <Prompt $w={94}>Add Time Tag</Prompt>
          </StatusRow>
        </StatusMid>
        <KeyBig $w={41} $h={41} aria-label="Set keys">
          <svg width="24" height="14" viewBox="0 0 24 14" fill="none" stroke="#080808" strokeWidth="2"><circle cx="5" cy="7" r="4" /><path d="M9 7h14M16 7v3M20 7v4" /></svg>
        </KeyBig>
        <KeyGrid>
          <Push $h={20}>Auto Key</Push>
          <SelectBox><select aria-label="Key set"><option>Selected</option></select><Arrow /></SelectBox>
          <Push>Set Key</Push>
          <KeyFilters>
            <StatusTool aria-label="Tangents"><Ic x={245} y={222} w={20} h={18}><path d="M250 258q8 4 14 10q2-32 18-36M274 234h18M282 234q4 10 4 22" stroke="#aaa" /><Corner x={288} y={275} /></Ic></StatusTool>
            <Push>Key Filters...</Push>
          </KeyFilters>
        </KeyGrid>
        <Playback>
          <FrameRow>
            <StatusTool aria-label="Go to start"><Ic x={580} y={157} w={20} h={20}><path d="M590 170v32" stroke="#eee" /><path d="M612 172v28l-18-14zM632 172v28l-18-14z" fill="#ddd" stroke="none" /></Ic></StatusTool>
            <StatusTool aria-label="Step back"><Ic x={654} y={157} w={20} h={20}><path d="M684 172v28l-22-14z" fill="#ddd" stroke="none" /><path d="M690 172v28M701 172v28" stroke="#ccc" strokeWidth="6" /></Ic></StatusTool>
            <StatusTool $w={20} aria-label="Play"><Ic x={718} y={157} w={20} h={20}><path d="M735 170v34l25-17z" fill="#ccc" stroke="none" /><Corner x={766} y={211} /></Ic></StatusTool>
            <StatusTool aria-label="Step forward"><Ic x={781} y={157} w={20} h={20}><path d="M812 172v28l22-14z" fill="#ddd" stroke="none" /><path d="M794 172v28M805 172v28" stroke="#ccc" strokeWidth="6" /></Ic></StatusTool>
            <StatusTool $w={26} aria-label="Go to end"><Ic x={855} y={157} w={20} h={20}><path d="M906 170v32" stroke="#eee" /><path d="M864 172v28l18-14zM884 172v28l18-14z" fill="#ddd" stroke="none" /></Ic></StatusTool>
          </FrameRow>
          <FrameRow>
            <StatusTool aria-label="Key mode"><Ic x={580} y={219} w={20} h={20}><path d="M590 236v26M632 236v26" stroke="#ddd" /><path d="M609 238v22l-14-11zM613 238v22l14-11z" fill="#ddd" stroke="none" /></Ic></StatusTool>
            <Field aria-label="Current frame" defaultValue="0" /><Spin />
            <StatusTool aria-label="Time configuration"><Ic x={876} y={219} w={20} h={20}><path d="M884 228h36v36h-36zM884 240h36M884 252h18M902 228v36" fill="#777" /><circle cx="916" cy="260" r="10" fill="#666" /><path d="M916 254v6h5" stroke="#fff" strokeWidth="3" /></Ic></StatusTool>
          </FrameRow>
        </Playback>
        <NavGrid>{nav.map(([n, icon]) => <StatusTool key={n} aria-label={n}>{icon}</StatusTool>)}</NavGrid>
      </Status>

      <DialogLayer>
        <Dialog role="dialog" aria-labelledby="dlg">
          <DialogTitle>
            <span id="dlg">Shape Import</span>
            <CloseBox aria-label="Close dialog"><svg width="10" height="10" viewBox="0 0 10 10"><path d="M1 1l8 8M9 1L1 9" stroke="#fff" strokeWidth="2" /></svg></CloseBox>
          </DialogTitle>
          <DialogGroup>
            <legend>Import Shapes As:</legend>
            <RadioLabel><input type="radio" name="as" /><span><u>S</u>ingle Object</span></RadioLabel>
            <RadioLabel><input type="radio" name="as" defaultChecked /><span><u>M</u>ultiple Objects</span></RadioLabel>
          </DialogGroup>
          <DialogButtons>
            <Push $w={71} $h={22}>OK</Push>
            <Push $w={71} $h={22}>Cancel</Push>
          </DialogButtons>
        </Dialog>
      </DialogLayer>
    </Shell>
  );
}
